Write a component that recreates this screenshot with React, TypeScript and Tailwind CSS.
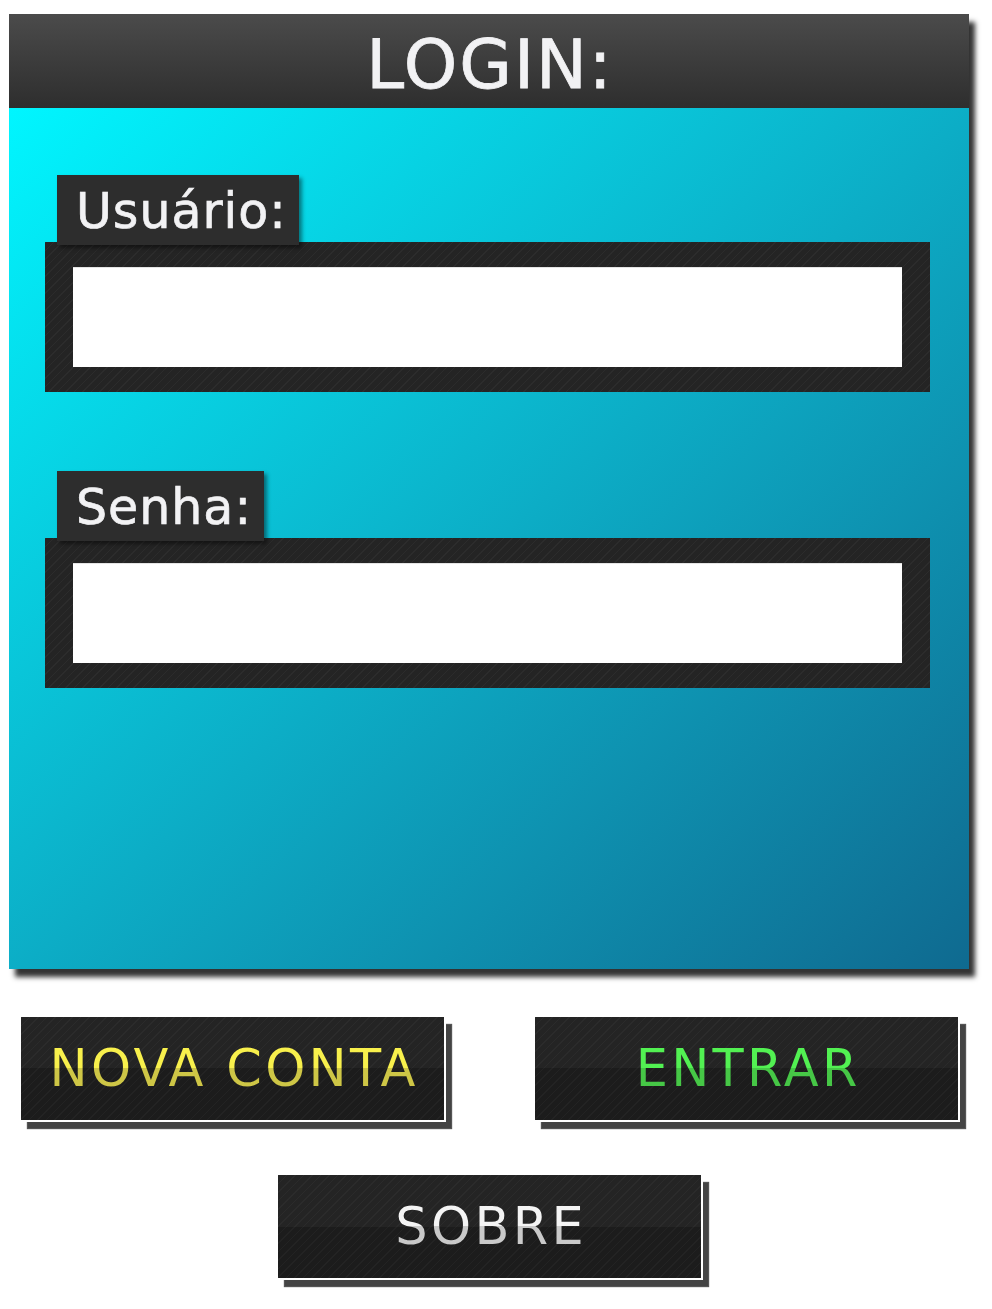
import React from 'react';

const stripes =
  'bg-[image:repeating-linear-gradient(135deg,rgba(255,255,255,0.035)_0px,rgba(255,255,255,0.035)_1px,transparent_1px,transparent_6px)]';

interface FieldProps {
  label: string;
  type?: string;
}

const Field: React.FC<FieldProps> = ({ label, type = 'text' }) => {
  return (
    <div className="flex flex-col">
      <div className="relative z-10 ml-[12px] -mb-[3px] self-start bg-[#2d2d2d] h-[70px] pl-[19px] pr-[12px] flex items-center shadow-[3px_3px_4px_rgba(0,0,0,0.45)]">
        <span className="text-[49px] leading-none tracking-[1px] text-[#f2f2f4] [-webkit-text-stroke:0.7px_#f2f2f4] font-['DejaVu_Sans',sans-serif] pt-[2px]">{label}</span>
      </div>
      <div className={`bg-[#242424] ${stripes} w-[885px] h-[150px] px-[28px] py-[25px]`}>
        <input
          type={type}
          className="w-full h-full bg-white border-t border-[#e4e4e4] outline-none px-4 text-3xl"
        />
      </div>
    </div>
  );
};

interface ButtonProps {
  label: string;
  textClass: string;
}

const GlossButton: React.FC<ButtonProps> = ({ label, textClass }) => {
  return (
    <button
      className={`w-[423px] h-[103px] flex items-center justify-center bg-[image:repeating-linear-gradient(135deg,rgba(255,255,255,0.03)_0px,rgba(255,255,255,0.03)_1px,transparent_1px,transparent_6px),linear-gradient(to_bottom,#242424_50%,#1c1c1c_50%)] shadow-[2px_2px_0_0_#ffffff,7px_8px_0_0_#444444,7px_8px_1px_1px_#555555]`}
    >
      <span
        className={`text-[51px] leading-none tracking-[3.3px] -mr-[3.3px] font-['DejaVu_Sans',sans-serif] bg-clip-text text-transparent ${textClass}`}
      >
        {label}
      </span>
    </button>
  );
};

export default function App() {
  return (
    <div className="w-[992px] h-[1309px] bg-white pt-[14px] pl-[9px] font-['DejaVu_Sans',sans-serif]">
      {/* Login panel */}
      <div className="w-[960px] shadow-[6px_8px_5px_#333333]">
        <div className="h-[94px] bg-gradient-to-b from-[#4b4b4b] to-[#2e2e2e] flex items-center justify-center">
          <h1 className="text-[68px] leading-none tracking-[2px] -mr-[2px] text-[#f2f2f4] [-webkit-text-stroke:0.8px_#f2f2f4] pt-[7px]">LOGIN:</h1>
        </div>
        <div className="h-[861px] bg-gradient-to-br from-[#00f6ff] to-[#0f6a90] pt-[67px] pl-[36px] flex flex-col gap-[79px]">
          <Field label="Usuário:" />
          <Field label="Senha:" type="password" />
        </div>
      </div>

      {/* Buttons */}
      <div className="mt-[48px] pl-[12px] w-[949px] flex flex-col items-center gap-[55px]">
        <div className="w-full flex justify-between">
          <GlossButton label="NOVA CONTA" textClass="bg-[linear-gradient(to_bottom,#f8f04c_50%,#cec646_50%)]" />
          <GlossButton label="ENTRAR" textClass="bg-[linear-gradient(to_bottom,#52f152_50%,#46c746_50%)]" />
        </div>
        <GlossButton label="SOBRE" textClass="bg-[linear-gradient(to_bottom,#f4f4f4_50%,#c9c9c9_50%)]" />
      </div>
    </div>
  );
}
